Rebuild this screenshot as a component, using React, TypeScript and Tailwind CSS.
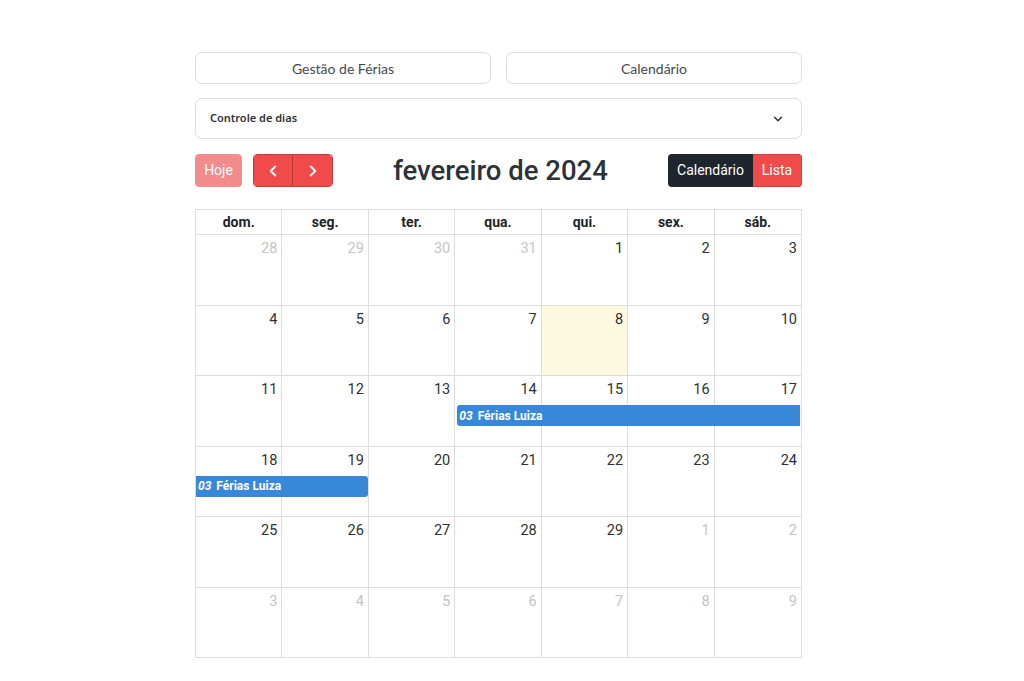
import { ChevronDown, ChevronLeft, ChevronRight } from "lucide-react"

const days = ["dom.", "seg.", "ter.", "qua.", "qui.", "sex.", "sáb."]

type Cell = { n: number; muted?: boolean; today?: boolean }

const weeks: Cell[][] = [
  [{ n: 28, muted: true }, { n: 29, muted: true }, { n: 30, muted: true }, { n: 31, muted: true }, { n: 1 }, { n: 2 }, { n: 3 }],
  [{ n: 4 }, { n: 5 }, { n: 6 }, { n: 7 }, { n: 8, today: true }, { n: 9 }, { n: 10 }],
  [{ n: 11 }, { n: 12 }, { n: 13 }, { n: 14 }, { n: 15 }, { n: 16 }, { n: 17 }],
  [{ n: 18 }, { n: 19 }, { n: 20 }, { n: 21 }, { n: 22 }, { n: 23 }, { n: 24 }],
  [{ n: 25 }, { n: 26 }, { n: 27 }, { n: 28 }, { n: 29 }, { n: 1, muted: true }, { n: 2, muted: true }],
  [{ n: 3, muted: true }, { n: 4, muted: true }, { n: 5, muted: true }, { n: 6, muted: true }, { n: 7, muted: true }, { n: 8, muted: true }, { n: 9, muted: true }],
]

const EventBar = ({ className }: { className: string }) => (
  <div
    className={`flex h-[21px] items-center gap-[5px] rounded-[3px] bg-[#3788d8] px-[2px] text-[12px] font-bold text-white ${className}`}
  >
    <span className="italic">03</span>
    <span>Férias Luiza</span>
  </div>
)

export default function App() {
  return (
    <div className="min-h-[681px] bg-white pl-[195px] pt-[52px] font-['Roboto',sans-serif]">
      <div className="w-[607px]">
        {/* abas */}
        <div className="grid grid-cols-2 gap-[15px] font-['Lato',sans-serif] text-[14px] text-[#45494d]">
          <button className="h-[32px] rounded-[7px] border border-[#dcdcdc] bg-white">
            Gestão de Férias
          </button>
          <button className="h-[32px] rounded-[7px] border border-[#dcdcdc] bg-white">
            Calendário
          </button>
        </div>

        <div className="mt-[14px] flex h-[41px] items-center justify-between rounded-[7px] border border-[#dcdcdc] pl-[14px] pr-[16px] font-['Noto_Sans',sans-serif] text-[11px] font-semibold text-[#2f3337]">
          <span>Controle de dias</span>
          <ChevronDown className="h-[14px] w-[14px] text-[#333]" strokeWidth={2.5} />
        </div>

        {/* toolbar */}
        <div className="mt-[15px] flex h-[33px] items-center justify-between">
          <div className="flex items-center gap-[11px]">
            <button className="h-[33px] w-[47px] rounded-[4px] border border-[#ee9090] bg-[#f28b8b] text-[14px] text-white">
              Hoje
            </button>
            <div className="flex h-[33px] overflow-hidden rounded-[4px] border border-[#c23a3a]">
              <button className="flex w-[39px] items-center justify-center border-r border-[#b83838] bg-[#f04a4a] text-white">
                <ChevronLeft className="h-[18px] w-[18px]" strokeWidth={2.5} />
              </button>
              <button className="flex w-[39px] items-center justify-center bg-[#f04a4a] text-white">
                <ChevronRight className="h-[18px] w-[18px]" strokeWidth={2.5} />
              </button>
            </div>
          </div>
          <h2 className="text-[27.5px] font-medium text-[#2c3238]">fevereiro de 2024</h2>
          <div className="flex h-[33px] overflow-hidden rounded-[4px] text-[14px] text-white">
            <button className="w-[85px] bg-[#1e252c]">Calendário</button>
            <button className="w-[49px] border border-l-0 border-[#d84040] bg-[#f04a4a]">Lista</button>
          </div>
        </div>

        {/* calendario */}
        <div className="mt-[22px] border border-[#dddddd]">
          <div className="grid grid-cols-7">
            {days.map((d, i) => (
              <div
                key={d}
                className={`flex h-[24px] items-center justify-center text-[14px] font-bold text-[#212529] ${i < 6 ? "border-r border-[#dddddd]" : ""}`}
              >
                {d}
              </div>
            ))}
          </div>
          {weeks.map((w, wi) => (
            <div key={wi} className="relative">
              <div className="grid grid-cols-7">
                {w.map((c, ci) => (
                  <div
                    key={ci}
                    className={`h-[70.5px] border-t border-[#dddddd] ${ci < 6 ? "border-r" : ""} ${c.today ? "bg-[#fcf9e0]" : ""}`}
                  >
                    <div
                      className={`pr-[4px] pt-[3px] text-right text-[14.5px] ${c.muted ? "text-[#c4c4c4]" : "text-[#2d3136]"}`}
                    >
                      {c.n}
                    </div>
                  </div>
                ))}
              </div>
              {wi === 2 && (
                <div className="absolute inset-x-0 top-[30px] grid grid-cols-7">
                  <EventBar className="col-span-4 col-start-4 ml-[2px] mr-[1px] rounded-r-none" />
                </div>
              )}
              {wi === 3 && (
                <div className="absolute inset-x-0 top-[30px] grid grid-cols-7">
                  <EventBar className="col-span-2 col-start-1 mr-[1px] rounded-l-none" />
                </div>
              )}
            </div>
          ))}
        </div>
      </div>
    </div>
  )
}
